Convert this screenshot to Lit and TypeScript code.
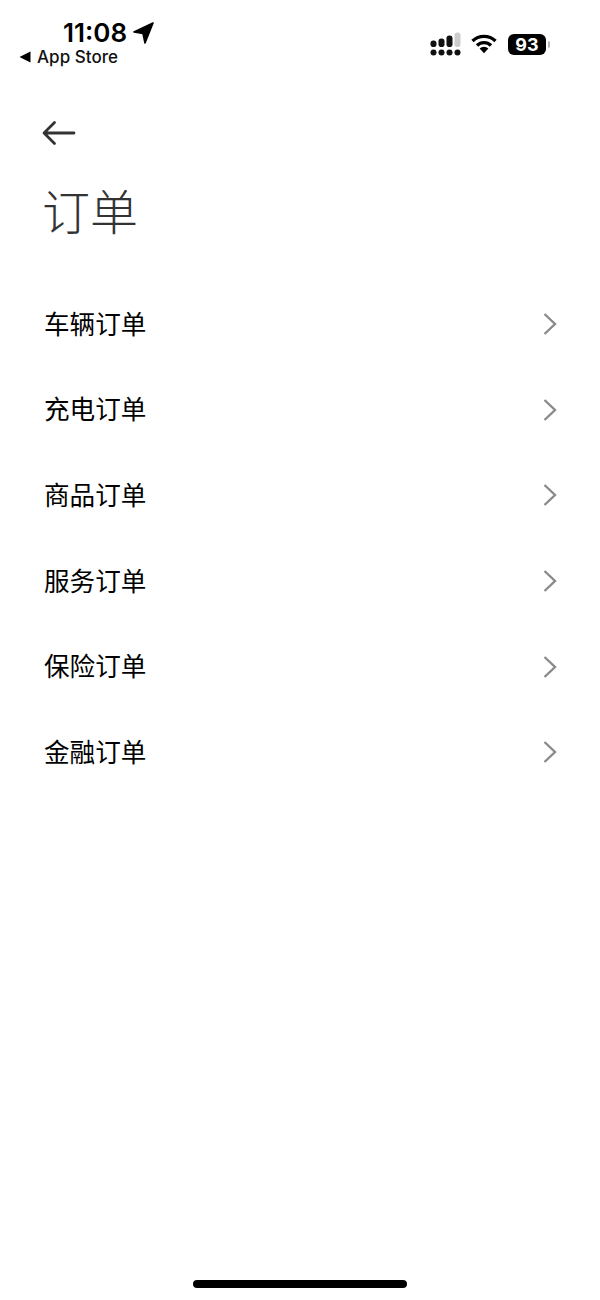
import { LitElement, html, css } from "lit";
import { customElement } from "lit/decorators.js";

const ORDERS = ["车辆订单", "充电订单", "商品订单", "服务订单", "保险订单", "金融订单"];

@customElement("app-root")
export class AppRoot extends LitElement {
  static styles = css`
    :host {
      display: flex;
      flex-direction: column;
      width: 600px;
      height: 1300px;
      background: #fff;
      overflow: hidden;
      font-family: "Noto Sans CJK SC", "Liberation Sans", sans-serif;
      color: #000;
    }
    .status {
      height: 72px;
      padding: 18px 50px 0 19px;
      box-sizing: border-box;
      display: flex;
      justify-content: space-between;
      flex: none;
    }
    .left { display: flex; flex-direction: column; }
    .time-row {
      display: flex;
      align-items: center;
      gap: 6px;
      height: 30px;
      padding-left: 44px;
      font: 600 26px/30px Inter, "Liberation Sans", sans-serif;
      color: #000;
    }
    .store {
      display: flex;
      align-items: center;
      gap: 6px;
      height: 18px;
      font: 500 17px/18px Inter, "Liberation Sans", sans-serif;
      letter-spacing: 0.05px;
      color: #111;
    }
    .right {
      display: flex;
      align-items: center;
      gap: 11px;
      height: 18px;
      margin-top: 17px;
    }
    .signal { margin-right: -1px; }
    .battery {
      display: flex;
      align-items: center;
      gap: 2px;
    }
    .cell {
      width: 38px;
      height: 21px;
      border-radius: 6px;
      background: #000;
      color: #fff;
      font: 700 18px/21px Inter, "Liberation Sans", sans-serif;
      text-align: center;
    }
    .nub {
      width: 2px;
      height: 7px;
      background: #b5b5b5;
      border-radius: 0 2px 2px 0;
    }
    .back {
      display: flex;
      padding: 48px 0 0 42px;
      height: 30px;
      flex: none;
    }
    h1 {
      margin: 24px 0 0 42px;
      font-size: 48px;
      line-height: 70px;
      font-weight: 300;
      color: #333;
    }
    ul {
      list-style: none;
      margin: 37.5px 0 0;
      padding: 0 43px 0 44px;
    }
    li {
      height: 85.6px;
      display: flex;
      align-items: center;
      justify-content: space-between;
      font-size: 25.6px;
      font-weight: 400;
    }
    li span { margin-bottom: 4px; }
    .spacer { flex: 1; }
    .home {
      flex: none;
      align-self: center;
      width: 214px;
      height: 8px;
      margin-bottom: 12px;
      background: #000;
      border-radius: 4px;
    }
    svg { display: block; }
  `;

  render() {
    return html`
      <div class="status">
        <div class="left">
          <div class="time-row">
            <span>11:08</span>
            <svg width="21" height="22" viewBox="0 0 21 22"><path d="M20 1 L1 10 L10 11.5 L12 21 Z" fill="#000" stroke="#000" stroke-width="1.6" stroke-linejoin="round"/></svg>
          </div>
          <div class="store">
            <svg width="12" height="12" viewBox="0 0 12 12"><path d="M0.5 6 L11.5 0.5 V11.5 Z" fill="#000"/></svg>
            <span>App Store</span>
          </div>
        </div>
        <div class="right">
          <svg class="signal" width="31" height="24" viewBox="0 0 31 24">
            <rect x="0.5" y="8.5" width="6" height="6.5" rx="2.8" fill="#111"/>
            <rect x="8.5" y="6.5" width="6" height="8.5" rx="2.8" fill="#111"/>
            <rect x="16.5" y="3.5" width="6" height="11.5" rx="2.8" fill="#111"/>
            <rect x="24.5" y="0.5" width="6" height="14.5" rx="2.8" fill="#ccc"/>
            <circle cx="3.5" cy="20.5" r="3" fill="#111"/>
            <circle cx="11.5" cy="20.5" r="3" fill="#111"/>
            <circle cx="19.5" cy="20.5" r="3" fill="#111"/>
            <circle cx="27.5" cy="20.5" r="3" fill="#111"/>
          </svg>
          <svg width="26" height="20" viewBox="0 0 26 20">
            <path d="M1.5 7 A16.5 16.5 0 0 1 24.5 7" fill="none" stroke="#000" stroke-width="3.4"/>
            <path d="M6 11.5 A10 10 0 0 1 20 11.5" fill="none" stroke="#000" stroke-width="3.4"/>
            <path d="M8.6 14.6 A6.2 6.2 0 0 1 17.4 14.6 L13 19.2 Z" fill="#000"/>
          </svg>
          <div class="battery">
            <div class="cell">93</div>
            <div class="nub"></div>
          </div>
        </div>
      </div>
      <div class="back">
        <svg width="34" height="26" viewBox="0 0 34 26"><path d="M32 13 H2.5 M12.5 2.5 L2 13 L12.5 23.5" fill="none" stroke="#333" stroke-width="2.8" stroke-linecap="round" stroke-linejoin="round"/></svg>
      </div>
      <h1>订单</h1>
      <ul>
        ${ORDERS.map(
          (o) => html`<li>
            <span>${o}</span>
            <svg width="14" height="24" viewBox="0 0 14 24"><path d="M1.5 2 L12 12 L1.5 22" fill="none" stroke="#8a8a8a" stroke-width="2.4"/></svg>
          </li>`
        )}
      </ul>
      <div class="spacer"></div>
      <div class="home"></div>
    `;
  }
}
